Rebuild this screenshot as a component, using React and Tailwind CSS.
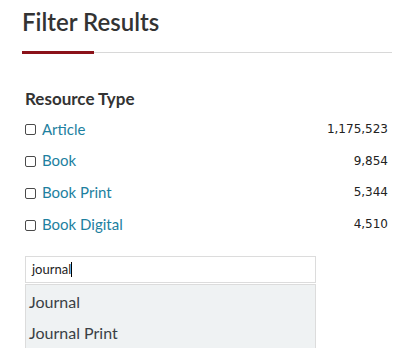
export default function App() {
  const rows = [
    { label: 'Article', count: '1,175,523' },
    { label: 'Book', count: '9,854' },
    { label: 'Book Print', count: '5,344' },
    { label: 'Book Digital', count: '4,510' },
  ]

  return (
    <div className="w-[415px] h-[348px] bg-white overflow-hidden font-['Lato',sans-serif]">
      <div className="pl-[22px] pr-[23px] pt-[10px]">
        <h2 className="text-[24px] leading-none font-semibold text-[#333]">Filter Results</h2>
        <div className="flex items-center mt-[17px]">
          <div className="w-[72px] h-[3px] bg-[#8b1219]" />
          <div className="flex-1 h-px bg-[#d8d8d8]" />
        </div>
      </div>

      <div className="pl-[25px] pr-[27px] mt-[36px]">
        <h3 className="text-[17px] leading-none font-bold text-[#333]">Resource Type</h3>
        <ul className="mt-[6px]">
          {rows.map((r) => (
            <li key={r.label} className="flex items-center h-[31.8px]">
              <span className="w-[11px] h-[11px] border-[1.5px] border-[#4a4a4a] rounded-[2px] mr-[6px] mt-[2px]" />
              <span className="text-[15px] text-[#1d80a0]">{r.label}</span>
              <span className="ml-auto text-[12px] text-[#222] font-['DejaVu_Sans',sans-serif]">{r.count}</span>
            </li>
          ))}
        </ul>

        <div className="w-[291px] mt-[16px]">
          <div className="h-[27px] border border-[#dcdcdc] flex items-center px-[6px] text-[13px] text-[#222]">
            journal<span className="w-px h-[15px] bg-black" />
          </div>
          <div className="mt-px bg-[#eff2f3] border border-[#dcdcdc] text-[16px] text-[#3a3f45] h-[80px] pt-[1px]">
            <div className="h-[31px] flex items-center px-[3px]">Journal</div>
            <div className="h-[31px] flex items-center px-[3px]">Journal Print</div>
          </div>
        </div>
      </div>
    </div>
  )
}
